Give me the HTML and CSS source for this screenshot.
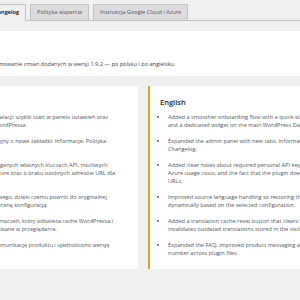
FILE: index.html
```html
<!DOCTYPE html>
<html lang="pl">
<head>
    <meta charset="UTF-8">
    <meta name="viewport" content="width=device-width, initial-scale=1.0">
    <title>Changelog</title>
    <link rel="stylesheet" href="styles.css">
</head>
<body>

<div class="wrap">
    <nav class="nav-tab-wrapper">
        <a href="#" class="nav-tab">Ustawienia</a>
        <a href="#" class="nav-tab">Informacje</a>
        <a href="#" class="nav-tab nav-tab-active">Changelog</a>
        <a href="#" class="nav-tab">Polityka wsparcia</a>
        <a href="#" class="nav-tab">Instrukcja Google Cloud i Azure</a>
    </nav>

    <div class="intro-box">
        <h2>Changelog</h2>
        <p>Pełna historia wersji wtyczki i podsumowanie zmian dodanych w wersji 1.9.2 — po polsku i po angielsku.</p>
    </div>

    <div class="changelog-grid">
        <div class="changelog-card lang-pl">
            <h3>Polski</h3>
            <ul>
                <li>Dodano wygodniejszy proces instalacji: szybki start w panelu ustawień oraz<br>dedykowany widżet w kokpicie WordPressa.</li>
                <li>Rozbudowano panel administracyjny o nowe zakładki: Informacje, Polityka<br>wsparcia i Changelog.</li>
                <li>Dodano jasne informacje o wymaganych własnych kluczach API, możliwych<br>kosztach użycia Google Cloud i Azure oraz o braku osobnych adresów URL dla<br>tłumaczeń.</li>
                <li>Ulepszono obsługę języka źródłowego, dzięki czemu powrót do oryginalnej<br>wersji strony działa zgodnie z wybraną konfiguracją.</li>
                <li>Dodano przycisk resetu cache tłumaczeń, który odświeża cache WordPressa i<br>unieważnia stare tłumaczenia zapisane w przeglądarce.</li>
                <li>Rozszerzono FAQ, poprawiono komunikację produktu i ujednolicono wersję<br>w plikach wtyczki.</li>
            </ul>
        </div>
        <div class="changelog-card lang-en">
            <h3>English</h3>
            <ul>
                <li>Added a smoother onboarding flow with a quick-start panel<br>and a dedicated widget on the main WordPress Dashboard.</li>
                <li>Expanded the admin panel with new tabs: Information, Guide and<br>Changelog.</li>
                <li>Added clear notes about required personal API keys, Google and<br>Azure usage costs, and the fact that the plugin does not use extra<br>URLs.</li>
                <li>Improved source language handling so restoring the original works<br>dynamically based on the selected configuration.</li>
                <li>Added a translation cache reset button that clears WordPress and<br>invalidates outdated translations stored in the visitor's browser.</li>
                <li>Expanded the FAQ, improved product messaging and unified the version<br>number across plugin files.</li>
            </ul>
        </div>
    </div>
</div>

</body>
</html>
```

FILE: styles.css
```css
body {
    margin: 0;
    background-color: #f0f0f1;
    font-family: "Open Sans", "Noto Sans", sans-serif;
    font-size: 5.6px;
    color: #3c434a;
    overflow-x: hidden;
}
.wrap {
    width: 500px;
    margin-left: -107px;
    padding-top: 4px;
}
.nav-tab-wrapper {
    display: flex;
    gap: 4px;
    margin-left: -2px;
    border-bottom: 1px solid #c3c4c7;
}
.nav-tab {
    display: block;
    margin-bottom: -1px;
    padding: 2px 6px 3px;
    line-height: 10px;
    border: 1px solid #c3c4c7;
    background-color: #dcdcde;
    color: #50575e;
    text-decoration: none;
    white-space: nowrap;
}
.nav-tab-active {
    background-color: #f0f0f1;
    border-bottom-color: #f0f0f1;
    color: #000;
    font-weight: 600;
}
.intro-box {
    margin-top: 10px;
    padding: 8px 12px;
    background-color: #fff;
}
.intro-box h2 {
    margin: 0 0 9px;
    font-size: 9px;
    line-height: 12px;
    color: #1d2327;
}
.intro-box p {
    margin: 0;
    line-height: 8px;
}
.changelog-grid {
    display: grid;
    grid-template-columns: 1fr 1fr;
    gap: 10px;
    margin-top: 10px;
}
.changelog-card {
    background-color: #fff;
    border-left: 2px solid #2271b1;
    padding: 12px 10px;
}
.changelog-card.lang-en {
    border-left-color: #dba617;
}
.changelog-card h3 {
    margin: 0 0 7px;
    font-size: 7.5px;
    line-height: 8px;
    font-weight: 600;
    color: #1d2327;
}
.changelog-card ul {
    margin: 0;
    padding-left: 8px;
    list-style: disc;
}
.changelog-card li {
    margin-bottom: 8px;
    line-height: 8px;
    color: #50575e;
}
.changelog-card li:last-child {
    margin-bottom: 0;
}
```
